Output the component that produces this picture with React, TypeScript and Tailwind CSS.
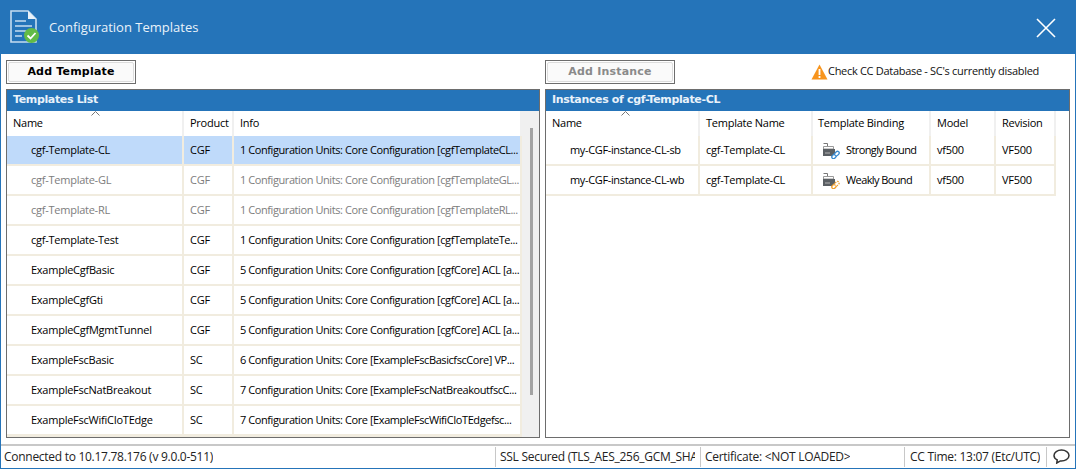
// Configuration Templates dialog

const templates = [
  { name: 'cgf-Template-CL', product: 'CGF', info: '1 Configuration Units: Core Configuration [cgfTemplateCL...', selected: true },
  { name: 'cgf-Template-GL', product: 'CGF', info: '1 Configuration Units: Core Configuration [cgfTemplateGL...', dim: true },
  { name: 'cgf-Template-RL', product: 'CGF', info: '1 Configuration Units: Core Configuration [cgfTemplateRL...', dim: true },
  { name: 'cgf-Template-Test', product: 'CGF', info: '1 Configuration Units: Core Configuration [cgfTemplateTe...' },
  { name: 'ExampleCgfBasic', product: 'CGF', info: '5 Configuration Units: Core Configuration [cgfCore] ACL [a...' },
  { name: 'ExampleCgfGti', product: 'CGF', info: '5 Configuration Units: Core Configuration [cgfCore] ACL [a...' },
  { name: 'ExampleCgfMgmtTunnel', product: 'CGF', info: '5 Configuration Units: Core Configuration [cgfCore] ACL [a...' },
  { name: 'ExampleFscBasic', product: 'SC', info: '6 Configuration Units: Core [ExampleFscBasicfscCore] VP...' },
  { name: 'ExampleFscNatBreakout', product: 'SC', info: '7 Configuration Units: Core [ExampleFscNatBreakoutfscC...' },
  { name: 'ExampleFscWifiCIoTEdge', product: 'SC', info: '7 Configuration Units: Core [ExampleFscWifiCIoTEdgefsc...' },
]

const instances = [
  { name: 'my-CGF-instance-CL-sb', template: 'cgf-Template-CL', binding: 'Strongly Bound', strong: true },
  { name: 'my-CGF-instance-CL-wb', template: 'cgf-Template-CL', binding: 'Weakly Bound', strong: false },
]

// ── Icons ────────────────────────────────────────────────────────────────

function DocCheckIcon() {
  return (
    <svg width="30" height="34" viewBox="0 0 30 34" className="-mt-[2px] shrink-0">
      <path d="M1 1H18L26 9V32H1Z" fill="#2574b9" stroke="#c5dcf0" strokeWidth="1.6" />
      <path d="M18 1V9H26Z" fill="#e8f1f9" />
      <path d="M5 11H16M5 16H22M5 21H17M5 26H12" stroke="#c5dcf0" strokeWidth="1.5" />
      <circle cx="21.500" cy="25.500" r="7.500" fill="#62bb46" />
      <path d="M17.500 25.500L20.500 28.500L25.500 23" fill="none" stroke="#fff" strokeWidth="1.800" />
    </svg>
  )
}

function CloseIcon() {
  return (
    <svg width="20" height="20" viewBox="0 0 20 20">
      <path d="M1 1L19 19M19 1L1 19" stroke="#fff" strokeWidth="1.6" />
    </svg>
  )
}

function WarningIcon() {
  return (
    <svg width="17" height="16" viewBox="0 0 17 16" className="shrink-0">
      <path d="M8.500 0.500L16.500 15.500H0.500Z" fill="#f7941d" />
      <path d="M7.600 5H9.400V11H7.600ZM7.600 12H9.400V14H7.600Z" fill="#fff" />
    </svg>
  )
}

function ChatIcon() {
  return (
    <svg width="17" height="15" viewBox="0 0 17 15">
      <path
        d="M8.500 1C4.500 1 1 3.200 1 6.500C1 8.500 2.300 10 4.200 10.900L3.800 14L7.400 11.900C12 12.200 16 10 16 6.500C16 3.200 12.500 1 8.500 1Z"
        fill="none"
        stroke="#333"
        strokeWidth="1.500"
      />
    </svg>
  )
}

function BindingIcon({ strong }: { strong: boolean }) {
  const color = strong ? '#3a8bd0' : '#f0a030'
  return (
    <svg width="17" height="17" viewBox="0 0 17 17" className="shrink-0">
      <path d="M0.500 1.500H4.500V4" fill="#fff" stroke="#777" strokeWidth="1" />
      <path d="M0.500 4.500H10.500V7H0.500Z" fill="#fff" stroke="#999" strokeWidth="1" />
      <path d="M0 7H12V14H0Z" fill="#5a5f63" />
      <path d="M2 11H7" stroke="#b5b5b5" strokeWidth="1" />
      <g fill="#fff" stroke={color} strokeWidth="1.300" transform="rotate(-45 12.500 13)">
        <rect x="8" y="11.300" width="5" height="3.400" rx="1.700" />
        <rect x="12" y="11.300" width="5" height="3.400" rx="1.700" strokeDasharray={strong ? undefined : '1.500 1'} />
      </g>
    </svg>
  )
}

// ── Parts ────────────────────────────────────────────────────────────────

function ActionButton({ label, disabled, width }: { label: string; disabled?: boolean; width: string }) {
  return (
    <button
      disabled={disabled}
      className={`${width} h-6 border border-[#6d6d6d] p-px font-['DejaVu_Sans'] text-[11px] font-bold tracking-[0.2px] ${disabled ? 'text-[#8a8a8a]' : 'text-black'}`}
    >
      <span className="flex h-full items-center justify-center rounded-[2px] border border-[#dcdcdc] bg-[#fafafa] pt-px">
        {label}
      </span>
    </button>
  )
}

function PanelTitle({ children }: { children: string }) {
  return (
    <div className="flex h-[21px] items-center bg-[#2574b9] px-[6px] font-['DejaVu_Sans'] text-[11px] font-bold tracking-[-0.35px] text-[#e9f2fa]">
      {children}
    </div>
  )
}

function HeaderCell({ label, width, caret, pad = 'pl-[6px]' }: { label: string; width: string; caret?: string; pad?: string }) {
  return (
    <div className={`${width} ${pad} relative flex h-full shrink-0 items-center border-r-2 border-[#f0f0f0]`}>
      {caret && (
        <svg width="9" height="5" viewBox="0 0 9 5" className={`absolute top-0 ${caret}`}>
          <path d="M0.500 4.500L4.500 0.500L8.500 4.500" fill="none" stroke="#777" strokeWidth="1" />
        </svg>
      )}
      {label}
    </div>
  )
}

function Cell({ width, className = '', children }: { width: string; className?: string; children: React.ReactNode }) {
  return (
    <div className={`${width} ${className} flex h-full shrink-0 items-center overflow-hidden whitespace-nowrap border-r-2 border-[#f1ecdf]`}>
      {children}
    </div>
  )
}

function TemplatesPanel() {
  return (
    <section className="flex w-[534px] shrink-0 flex-col overflow-hidden border border-[#6d6d6d]">
      <PanelTitle>Templates List</PanelTitle>
      <div className="flex min-h-0 flex-1">
        <div className="min-w-0 flex-1 overflow-hidden">
          <div className="flex h-[25px] items-center">
            <HeaderCell label="Name" width="w-[177px]" caret="left-[84px]" />
            <HeaderCell label="Product" width="w-[50px]" />
            <HeaderCell label="Info" width="w-[288px]" />
          </div>
          {templates.map((t) => (
            <div
              key={t.name}
              className={`flex h-[30px] items-center border-b-2 border-[#f1ecdf] ${t.selected ? 'bg-[#bfdafa]' : ''} ${t.dim ? 'text-[#7d7d7d]' : 'text-black'}`}
            >
              <Cell width="w-[177px]" className="pl-[24px]">{t.name}</Cell>
              <Cell width="w-[50px]" className="pl-[6px]">{t.product}</Cell>
              <Cell width="w-[288px]" className="pl-[6px] tracking-[-0.42px]">{t.info}</Cell>
            </div>
          ))}
          <div className="h-[2px] border-b-2 border-[#f1ecdf]" />
        </div>
        <div className="flex w-[17px] shrink-0 justify-center bg-[#f0f0f0] pl-[2px] pt-[17px]">
          <div className="h-[267px] w-[3px] bg-[#a3a3a3]" />
        </div>
      </div>
    </section>
  )
}

function InstancesPanel() {
  return (
    <section className="flex min-w-0 flex-1 flex-col overflow-hidden border border-[#6d6d6d]">
      <PanelTitle>Instances of cgf-Template-CL</PanelTitle>
      <div className="flex h-[25px] items-center">
        <HeaderCell label="Name" width="w-[154px]" caret="left-[75px]" />
        <HeaderCell label="Template Name" width="w-[113px]" />
        <HeaderCell label="Template Binding" width="w-[118px]" pad="pl-[5px]" />
        <HeaderCell label="Model" width="w-[65px]" />
        <HeaderCell label="Revision" width="w-[60px]" />
      </div>
      {instances.map((i) => (
        <div key={i.name} className="flex h-[30px] w-[510px] items-center border-b-2 border-[#f1ecdf]">
          <Cell width="w-[154px]" className="pl-[24px] tracking-[-0.35px]">{i.name}</Cell>
          <Cell width="w-[113px]" className="pl-[6px]">{i.template}</Cell>
          <Cell width="w-[118px]" className="gap-[6px] pl-[10px] tracking-[-0.6px]">
            <BindingIcon strong={i.strong} />
            {i.binding}
          </Cell>
          <Cell width="w-[65px]" className="pl-[6px]">vf500</Cell>
          <Cell width="w-[60px]" className="pl-[6px]">VF500</Cell>
        </div>
      ))}
    </section>
  )
}

function StatusCell({ width, pad = 'pl-[4px]', children }: { width: string; pad?: string; children: React.ReactNode }) {
  return (
    <div className={`${width} ${pad} flex h-[20px] items-center whitespace-nowrap border-r border-[#c8c8c8] pr-[5px]`}>
      <span className="overflow-hidden">{children}</span>
    </div>
  )
}

export default function App() {
  return (
    <div className="flex h-[469px] w-[1076px] flex-col overflow-hidden border-x border-b border-[#2574b9] bg-white font-['Open_Sans'] text-[11px] tracking-[-0.25px] text-black">
      <header className="flex h-[54px] shrink-0 items-center bg-[#2574b9] pl-[9px] pr-[19px] pt-[2px]">
        <DocCheckIcon />
        <h1 className="ml-[9px] flex-1 text-[13px] font-normal tracking-normal text-[#e9f2fa]">
          Configuration Templates
        </h1>
        <CloseIcon />
      </header>

      <div className="flex h-[35px] shrink-0 items-center px-[5px]">
        <ActionButton label="Add Template" width="w-[130px]" />
        <div className="ml-[409px]">
          <ActionButton label="Add Instance" disabled width="w-[130px]" />
        </div>
        <div className="ml-[136px] flex items-center tracking-[-0.3px] text-[#111]">
          <WarningIcon />
          <span>Check CC Database - SC's currently disabled</span>
        </div>
      </div>

      <main className="flex min-h-0 flex-1 gap-[5px] px-[5px]">
        <TemplatesPanel />
        <InstancesPanel />
      </main>

      <footer className="mt-[6px] flex h-[24px] shrink-0 items-center border-t-2 border-[#c8c8c8] pb-px text-[12px] tracking-[-0.28px] text-[#222]">
        <StatusCell width="w-[495px]" pad="pl-[3px]">Connected to 10.17.78.176 (v 9.0.0-511)</StatusCell>
        <StatusCell width="w-[205px]">SSL Secured (TLS_AES_256_GCM_SHA</StatusCell>
        <StatusCell width="w-[204px]">Certificate: &lt;NOT LOADED&gt;</StatusCell>
        <StatusCell width="w-[142px]" pad="pl-[5px]">CC Time: 13:07 (Etc/UTC)</StatusCell>
        <div className="flex flex-1 justify-center">
          <ChatIcon />
        </div>
      </footer>
    </div>
  )
}
